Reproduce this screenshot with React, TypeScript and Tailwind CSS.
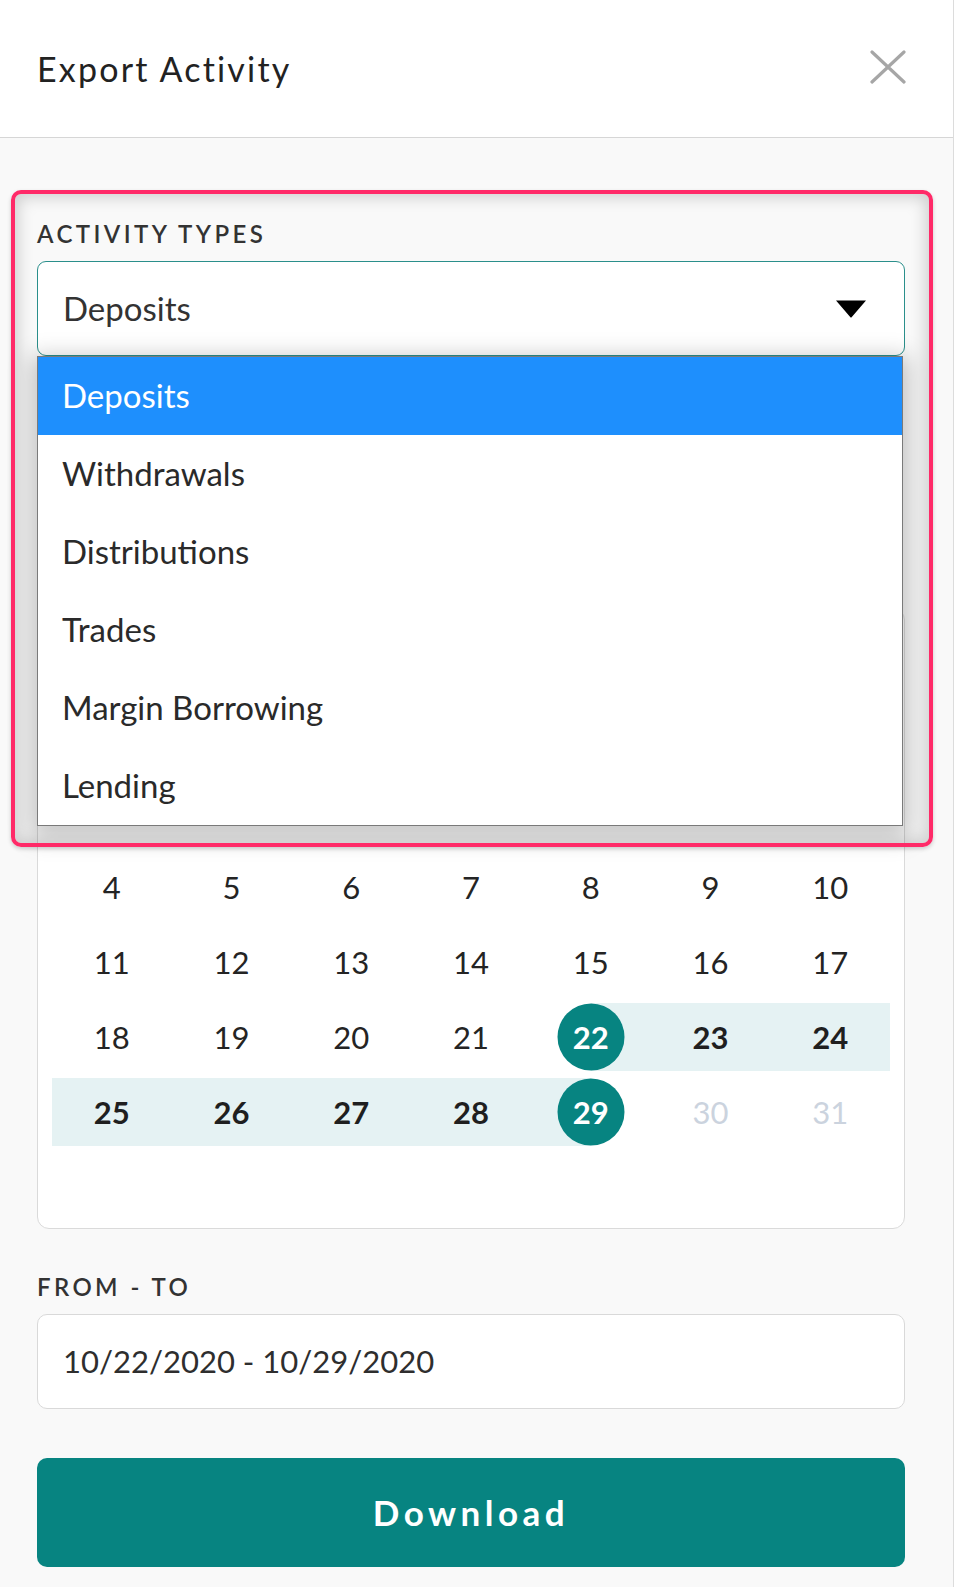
const FONT = "font-['Lato','Liberation_Sans',sans-serif]";

const ACTIVITY_TYPES = [
  "Deposits",
  "Withdrawals",
  "Distributions",
  "Trades",
  "Margin Borrowing",
  "Lending",
];

const WEEKDAYS = ["S", "M", "T", "W", "T", "F", "S"];

// October 2020 starts on a Thursday
const CELLS: (number | null)[] = [
  null, null, null, null, 1, 2, 3,
  4, 5, 6, 7, 8, 9, 10,
  11, 12, 13, 14, 15, 16, 17,
  18, 19, 20, 21, 22, 23, 24,
  25, 26, 27, 28, 29, 30, 31,
  null, null, null, null, null, null, null,
];

const RANGE_START = 22;
const RANGE_END = 29;
const LAST_ENABLED = 29;

function DayCell({ day }: { day: number | null }) {
  if (day === null) return <div className="h-[68px]" />;

  const isStart = day === RANGE_START;
  const isEnd = day === RANGE_END;
  const inRange = day > RANGE_START && day < RANGE_END;
  const disabled = day > LAST_ENABLED;

  return (
    <div className="relative flex h-[68px] items-center justify-center">
      {inRange && <div className="absolute inset-0 bg-[#e5f2f3]" />}
      {isStart && <div className="absolute inset-y-0 right-0 left-1/2 bg-[#e5f2f3]" />}
      {isEnd && <div className="absolute inset-y-0 left-0 right-1/2 bg-[#e5f2f3]" />}
      {(isStart || isEnd) && (
        <div className="absolute left-1/2 top-1/2 h-[67px] w-[67px] -translate-x-1/2 -translate-y-1/2 rounded-full bg-[#078481]" />
      )}
      <span
        className={`relative text-[31px] leading-none ${
          isStart || isEnd
            ? "font-bold text-white"
            : inRange
            ? "font-bold text-[#1f1f1f]"
            : disabled
            ? "text-[#cbd3de]"
            : "text-[#242424]"
        }`}
      >
        {day}
      </span>
    </div>
  );
}

function FieldLabel({ children }: { children: React.ReactNode }) {
  return (
    <div className="h-[28px] text-[24px] font-semibold leading-[28px] tracking-[3.4px] text-[#333]">
      {children}
    </div>
  );
}

export default function App() {
  return (
    <div className={`min-h-screen w-[957px] bg-white ${FONT}`}>
      <div className="relative w-[954px] border-r border-[#dcdcdc] bg-[#f9f9f9]">
        {/* header */}
        <div className="flex h-[138px] items-center justify-between border-b border-[#d6d6d6] bg-white pl-[37px] pr-[47px]">
          <h1 className="text-[34px] font-normal tracking-[2.2px] text-[#222]">Export Activity</h1>
          <svg width="36" height="34" viewBox="0 0 36 34" className="mt-[-3px]">
            <path
              d="M2 2 L34 32 M34 2 L2 32"
              stroke="#a6a6a6"
              strokeWidth="3.2"
              strokeLinecap="round"
              fill="none"
            />
          </svg>
        </div>

        <div className="w-[868px] ml-[37px] pt-[82px] pb-[20px]">
          {/* activity types */}
          <div className="relative">
            <FieldLabel>ACTIVITY TYPES</FieldLabel>
            <div className="mt-[13px] flex h-[95px] items-center justify-between rounded-[9px] border border-[#2a8f8b] bg-white pl-[25px] pr-[36px]">
              <span className="text-[33px] text-[#333]">Deposits</span>
              <svg width="34" height="20" viewBox="0 0 34 20">
                <path d="M2 1.5 H32 L17.8 18 Q17 19 16.2 18 Z" fill="#000" />
              </svg>
            </div>

            {/* open dropdown menu */}
            <div className="absolute left-0 top-full z-10 w-[866px] border border-[#7a7a7a] bg-white shadow-[0_6px_22px_6px_rgba(0,0,0,0.22)]">
              {ACTIVITY_TYPES.map((t, i) => (
                <div
                  key={t}
                  className={`flex h-[78px] items-center pl-[24px] text-[33px] ${
                    i === 0 ? "bg-[#1e8ffd] text-white" : "text-[#2a2a2a]"
                  }`}
                >
                  {t}
                </div>
              ))}
            </div>
          </div>

          {/* calendar (top part sits under the open menu) */}
          <div className="mt-[252px] rounded-[12px] border border-[#dadada] bg-white px-[14px] pt-[18px] pb-[7px]">
            <div className="flex h-[90px] items-center justify-between px-[20px] text-[30px] font-bold text-[#222]">
              <span className="text-[#999]">‹</span>
              <span>October 2020</span>
              <span className="text-[#999]">›</span>
            </div>
            <div className="grid h-[61px] grid-cols-7 items-center text-center text-[22px] font-semibold text-[#888]">
              {WEEKDAYS.map((d, i) => (
                <span key={i}>{d}</span>
              ))}
            </div>
            <div className="grid grid-cols-7 gap-y-[7px]">
              {CELLS.map((d, i) => (
                <DayCell key={i} day={d} />
              ))}
            </div>
          </div>

          {/* from - to */}
          <div className="mt-[44px]">
            <FieldLabel>FROM - TO</FieldLabel>
            <div className="mt-[13px] flex h-[95px] items-center rounded-[10px] border border-[#d9d9d9] bg-white pl-[25px] text-[31px] text-[#2e2e2e]">
              10/22/2020 - 10/29/2020
            </div>
          </div>

          <button className="mt-[49px] flex h-[109px] w-full items-center justify-center rounded-[10px] bg-[#078481] text-[35px] font-bold tracking-[4.5px] text-white">
            Download
          </button>
        </div>

        {/* annotation highlight */}
        <div className="pointer-events-none absolute left-[11px] top-[190px] z-20 h-[657px] w-[922px] rounded-[10px] border-[4px] border-[#ff2a68] shadow-[inset_0_0_16px_3px_rgba(0,0,0,0.18),0_2px_4px_rgba(0,0,0,0.18)]" />
      </div>
    </div>
  );
}
